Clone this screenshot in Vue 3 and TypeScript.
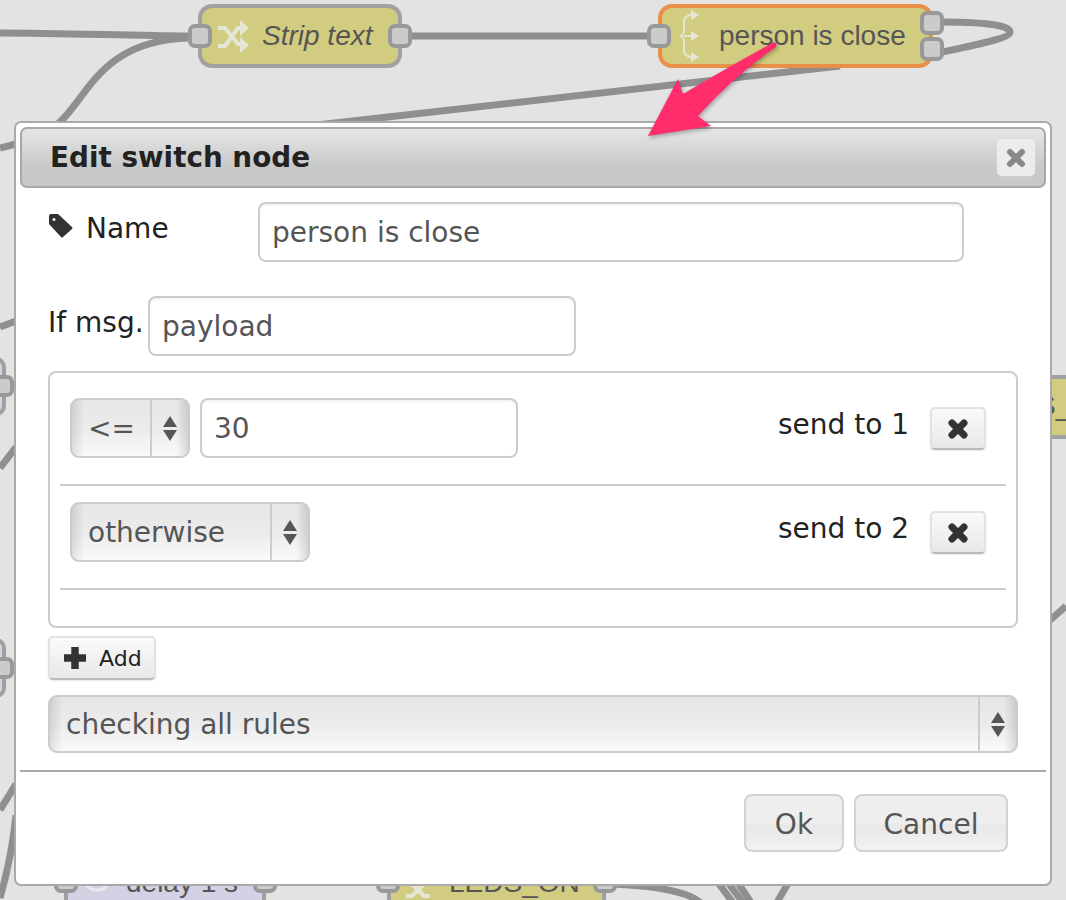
<template>
  <div class="stage">
    <svg class="canvas" width="1066" height="900" viewBox="0 0 1066 900">
      <g class="wires">
        <path d="M0 33 C70 33 130 36 190 36" />
        <path d="M58 124 C88 98 100 40 190 38" />
        <path d="M400 36 H650" />
        <path d="M942 22 C1000 22 1010 28 1010 32 C1010 38 980 44 942 52" />
        <path d="M290 128 L840 66" />
        <path d="M0 148 L16 144" />
        <path d="M0 327 L16 321" />
        <path d="M0 468 L16 447" />
        <path d="M0 810 L16 784" />
        <path d="M0 898 C8 870 13 845 16 815" />
        <path d="M1048 622 L1066 606" />
        <path d="M612 884 C660 886 690 892 702 904" />
        <path d="M716 880 L734 904" />
        <path d="M726 880 L744 904" />
        <path d="M736 880 L752 904" />
        <path d="M790 880 L776 904" />
      </g>

      <g v-for="n in nodes" :key="n.label">
        <rect class="node" :class="n.selected && 'selected'" :x="n.x" y="6" :width="n.w" height="60" rx="12" />
        <text class="node-label" :class="n.italic && 'italic'" :x="n.textX" y="45">{{ n.label }}</text>
      </g>

      <g class="node-icon">
        <path class="thick" d="M218 28 H225 L238 44 H243 M218 46 H225 L238 28 H243" />
        <path class="fill" d="M240 20 L249 28 L240 36 Z M240 37 L249 45 L240 53 Z" />
        <path d="M692 15 C682 15 684 24 684 30 C684 34 682 36 680 36 C682 36 684 38 684 42 C684 48 682 57 692 57 M684 36 H692" />
        <path class="fill" d="M691 10 L699 15 L691 20 Z M691 31 L699 36 L691 41 Z M691 52 L699 57 L691 62 Z" />
      </g>

      <rect v-for="p in ports" :key="p.x + '-' + p.y" class="port" :x="p.x" :y="p.y" width="20" height="20" rx="5" />

      <rect class="node lilac" x="-20" y="359" width="24" height="55" rx="8" />
      <rect class="port" x="-10" y="377" width="22" height="18" rx="5" />
      <rect class="node lilac" x="-20" y="640" width="24" height="56" rx="8" />
      <rect class="port" x="-10" y="659" width="22" height="18" rx="5" />

      <rect class="node" x="1040" y="377" width="60" height="60" rx="4" />
      <text class="node-label" x="1037" y="415">S_</text>

      <rect class="node lilac" x="66" y="856" width="198" height="60" rx="10" />
      <circle class="clock" cx="97" cy="876" r="14" />
      <text class="node-label" x="126" y="892">delay 1 s</text>
      <rect class="node" x="389" y="856" width="215" height="60" rx="10" />
      <path class="node-icon-line" d="M406 884 H412 L424 896 H430 M406 896 H412 L424 884 H430" />
      <text class="node-label" x="449" y="892">LEDS_ON</text>
      <rect class="port" x="56" y="871" width="20" height="20" rx="5" />
      <rect class="port" x="255" y="871" width="20" height="20" rx="5" />
      <rect class="port" x="378" y="871" width="20" height="20" rx="5" />
      <rect class="port" x="595" y="871" width="20" height="20" rx="5" />
    </svg>

    <div class="dialog">
      <div class="title">
        <span>Edit switch node</span>
        <div class="close">
          <svg width="22" height="22" viewBox="0 0 22 22"><path d="M5 5 L17 17 M17 5 L5 17" /></svg>
        </div>
      </div>

      <div class="form">
        <div class="name-row">
          <label class="name-label">
            <svg class="tag" width="26" height="26" viewBox="0 0 26 26">
              <path d="M1 3 Q1 1 3 1 H10 L24 14 Q25 15 24 16 L15 24 Q14 25 13 24 L1 11 Z M6 5 A1.5 1.5 0 1 0 6.01 5 Z" fill-rule="evenodd" />
            </svg>
            Name
          </label>
          <input class="text-input name-input" value="person is close" readonly />
        </div>

        <div class="prop-row">
          <label class="prop-label">If msg.</label>
          <input class="text-input prop-input" value="payload" readonly />
        </div>

        <div class="rules">
          <div v-for="(rule, i) in rules" :key="rule.op" class="rule">
            <div class="select" :style="{ width: rule.width + 'px' }">
              <span class="select-text">{{ rule.op }}</span>
              <span class="select-arrows"><i class="up"></i><i class="down"></i></span>
            </div>
            <input v-if="rule.value" class="text-input value-input" :value="rule.value" readonly />
            <span class="send-to">send to {{ i + 1 }}</span>
            <button class="delete">
              <svg width="24" height="24" viewBox="0 0 24 24"><path d="M6 6 L18 18 M18 6 L6 18" /></svg>
            </button>
          </div>
        </div>

        <button class="add">
          <svg width="24" height="24" viewBox="0 0 24 24"><path d="M12 1 V23 M1 12 H23" /></svg>
          Add
        </button>

        <div class="select wide">
          <span class="select-text">checking all rules</span>
          <span class="select-arrows"><i class="up"></i><i class="down"></i></span>
        </div>
      </div>

      <div class="footer">
        <button class="action ok">Ok</button>
        <button class="action cancel">Cancel</button>
      </div>
    </div>

    <svg class="arrow" width="160" height="110" viewBox="0 0 160 110">
      <path d="M136 12 Q92 36 45 64 L40 49 L10 106 L73 96 L60 86 Q97 45 138 17 Q140 13 136 12 Z" />
    </svg>
  </div>
</template>

<script setup lang="ts">
const nodes = [
  { label: 'Strip text', x: 200, w: 200, textX: 262, italic: true, selected: false },
  { label: 'person is close', x: 660, w: 271, textX: 719, italic: false, selected: true }
]

const ports = [
  { x: 190, y: 26 },
  { x: 390, y: 26 },
  { x: 649, y: 26 },
  { x: 922, y: 13 },
  { x: 922, y: 39 }
]

const rules = [
  { op: '<=', value: '30', width: 120 },
  { op: 'otherwise', value: '', width: 240 }
]
</script>

<style>
body {
  margin: 0;
  background: #e3e3e3;
}
</style>

<style scoped>
.stage {
  position: relative;
  width: 1066px;
  height: 900px;
  overflow: hidden;
  background: #e3e3e3;
  font-family: "DejaVu Sans", sans-serif;
  color: #222;
}

.canvas {
  position: absolute;
  left: 0;
  top: 0;
}

.wires path {
  fill: none;
  stroke: #8f8f8f;
  stroke-width: 7;
}

.node {
  fill: #d1cc7f;
  stroke: #a0a0a0;
  stroke-width: 4;
}

.node.selected {
  stroke: #e8904a;
}

.node.lilac {
  fill: #d4d1e4;
}

.port {
  fill: #cbcbcb;
  stroke: #999;
  stroke-width: 4;
}

.clock {
  fill: none;
  stroke: #e8e8ee;
  stroke-width: 3;
}

.node-label {
  font-family: "Liberation Sans", sans-serif;
  font-size: 28px;
  fill: #555;
}

.node-label.italic {
  font-style: italic;
}

.node-icon path,
.node-icon-line {
  fill: none;
  stroke: #e6e6d6;
  stroke-width: 2;
}

.node-icon path.thick,
.node-icon-line {
  stroke-width: 4;
}

.node-icon path.fill {
  fill: #e6e6d6;
  stroke: none;
}

.dialog {
  position: absolute;
  left: 14px;
  top: 121px;
  width: 1026px;
  height: 753px;
  padding: 4px;
  background: #fff;
  border: 2px solid #aaa;
  border-radius: 7px;
}

.title {
  display: flex;
  align-items: center;
  justify-content: space-between;
  box-sizing: border-box;
  height: 61px;
  padding: 0 9px 0 28px;
  border: 2px solid #a8a8a8;
  border-radius: 7px;
  background: linear-gradient(#e6e6e6, #c9c9c9 65%, #c8c8c8);
  font-size: 27.8px;
  font-weight: bold;
}

.close {
  display: flex;
  align-items: center;
  justify-content: center;
  width: 38px;
  height: 37px;
  border-radius: 5px;
  background: #ececec;
  box-shadow: 0 0 2px #ddd;
}

.close path {
  fill: none;
  stroke: #888;
  stroke-width: 6;
  stroke-linecap: round;
}

.form {
  padding: 14px 28px 0;
}

.text-input {
  box-sizing: border-box;
  height: 60px;
  padding: 0 12px;
  background: #fff;
  border: 2px solid #ccc;
  border-radius: 8px;
  box-shadow: inset 0 2px 2px rgba(0, 0, 0, 0.05);
  font-family: inherit;
  font-size: 28px;
  color: #555;
  outline: none;
}

.name-row {
  display: flex;
}

.name-label {
  display: flex;
  gap: 12px;
  width: 210px;
  padding-top: 10px;
  font-size: 28px;
  line-height: 34px;
}

.tag {
  margin-top: 1px;
}

.tag path {
  fill: #333;
}

.name-input {
  width: 706px;
}

.prop-row {
  display: flex;
  margin: 34px 0 15px;
}

.prop-label {
  width: 100px;
  padding-top: 10px;
  font-size: 28px;
  line-height: 34px;
}

.prop-input {
  width: 428px;
}

.rules {
  box-sizing: border-box;
  height: 257px;
  padding: 9px 10px 0;
  border: 2px solid #ccc;
  border-radius: 8px;
}

.rule {
  display: flex;
  align-items: flex-start;
  box-sizing: border-box;
  height: 104px;
  padding: 16px 20px 0 10px;
  border-bottom: 2px solid #ccc;
}

.select {
  display: flex;
  align-items: center;
  box-sizing: border-box;
  height: 60px;
  border: 2px solid #ccc;
  border-radius: 9px;
  background:
    linear-gradient(90deg, rgba(0, 0, 0, 0.1), transparent 12px, transparent calc(100% - 12px), rgba(0, 0, 0, 0.12)),
    linear-gradient(#e6e6e6, #ececec 55%, #fafafa);
  font-size: 28px;
  color: #555;
}

.select-text {
  flex: 1;
  padding-left: 16px;
}

.select-arrows {
  display: flex;
  flex-direction: column;
  align-items: center;
  justify-content: center;
  gap: 3px;
  align-self: stretch;
  width: 36px;
  border-left: 2px solid #ccc;
}

.select-arrows i {
  width: 0;
  height: 0;
  border-left: 7px solid transparent;
  border-right: 7px solid transparent;
}

.select-arrows .up {
  border-bottom: 11px solid #555;
}

.select-arrows .down {
  border-top: 11px solid #555;
}

.value-input {
  width: 318px;
  margin-left: 10px;
}

.send-to {
  margin-left: auto;
  font-size: 28px;
  line-height: 54px;
}

.delete {
  display: flex;
  align-items: center;
  justify-content: center;
  box-sizing: border-box;
  width: 56px;
  height: 43px;
  margin: 9px 0 0 21px;
  padding: 0;
  border: 2px solid #e2e2e2;
  border-bottom-color: #bbb;
  border-radius: 5px;
  background: linear-gradient(#fafafa, #e8e8e8);
  box-shadow: 0 1px 2px rgba(0, 0, 0, 0.1);
}

.delete path {
  fill: none;
  stroke: #333;
  stroke-width: 7;
  stroke-linecap: round;
}

.add {
  display: flex;
  align-items: center;
  gap: 12px;
  box-sizing: border-box;
  width: 108px;
  height: 44px;
  margin: 8px 0 15px;
  padding: 0 0 0 13px;
  border: 2px solid #e2e2e2;
  border-bottom-color: #bbb;
  border-radius: 5px;
  background: linear-gradient(#fafafa, #e8e8e8);
  box-shadow: 0 1px 2px rgba(0, 0, 0, 0.1);
  font-family: inherit;
  font-size: 22px;
  color: #222;
}

.add path {
  fill: none;
  stroke: #333;
  stroke-width: 7.5;
}

.select.wide {
  height: 58px;
}

.footer {
  display: flex;
  justify-content: flex-end;
  gap: 10px;
  margin-top: 17px;
  padding: 22px 38px 0 0;
  border-top: 2px solid #aaa;
}

.action {
  box-sizing: border-box;
  height: 58px;
  padding: 2px 0 0;
  border: 2px solid #d2d2d2;
  border-radius: 8px;
  background: linear-gradient(#eee, #eee 50%, #e8e8e8 55%, #f2f2f2);
  font-family: inherit;
  font-size: 28px;
  color: #555;
}

.ok {
  width: 100px;
}

.cancel {
  width: 154px;
}

.arrow {
  position: absolute;
  left: 638px;
  top: 30px;
  overflow: visible;
}

.arrow path {
  fill: #ff2d6c;
  filter: drop-shadow(1px 2px 2px rgba(0, 0, 0, 0.3));
}
</style>
